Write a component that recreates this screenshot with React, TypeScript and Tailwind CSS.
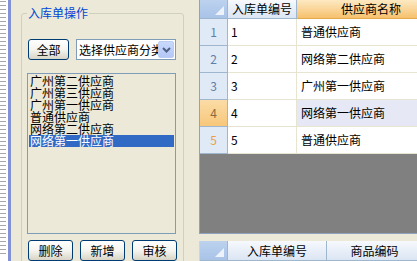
import React from 'react';

const suppliers = ['广州第二供应商', '广州第三供应商', '广州第一供应商', '普通供应商', '网络第二供应商', '网络第一供应商'];

const rows = [
  { no: '1', name: '普通供应商' },
  { no: '2', name: '网络第二供应商' },
  { no: '3', name: '广州第一供应商' },
  { no: '4', name: '网络第一供应商' },
  { no: '5', name: '普通供应商' },
];

function XpButton({ label, className = '' }: { label: string; className?: string }) {
  return (
    <button
      className={`h-[21px] shrink-0 rounded-[3px] border border-[#003c74] bg-linear-to-b from-white via-[#f5f4ef] to-[#d8d4c6] text-[12px] leading-none text-black ${className}`}
    >
      {label}
    </button>
  );
}

function CornerCell() {
  return (
    <div className="relative w-[28px] shrink-0 border-r border-b border-[#9eb6ce] bg-linear-to-b from-[#bcd2ee] to-[#a9c3e8]">
      <svg className="absolute right-[3px] bottom-[3px]" width="9" height="9" viewBox="0 0 9 9">
        <polygon points="9,0 9,9 0,9" fill="#eef3fb" />
      </svg>
    </div>
  );
}

export default function App() {
  const selected = 5;

  return (
    <div className="flex h-[261px] w-[417px] overflow-hidden bg-[#ece9d8] font-['Noto_Sans_CJK_SC','Noto_Sans',sans-serif] text-[12px] text-black">
      {/* tree strip on the far left */}
      <div className="flex w-[8px] shrink-0 flex-col bg-white pt-[1px]">
        {Array.from({ length: 64 }).map((_, i) => (
          <div key={i} className="mb-[3px] h-px w-[6px] bg-[#a8a8a8]" />
        ))}
      </div>
      <div className="w-[3px] shrink-0 bg-[#8392d6]" />

      {/* operations panel */}
      <div className="w-[188px] shrink-0">
        <fieldset className="mt-[6px] ml-[10px] w-[163px] rounded-[3px] border border-[#d0d0bf] pr-[6px] pb-[10px] pl-[5px]">
          <legend className="px-[1px] text-[12px] leading-[14px] text-[#0046d5]">入库单操作</legend>

          <div className="mt-[19px] flex items-center">
            <XpButton label="全部" className="ml-px w-[41px]" />
            <div className="ml-[7px] flex h-[21px] w-[100px] items-center border border-[#7f9db9] bg-white pr-px pl-[2px]">
              <span className="flex-1 overflow-hidden leading-[14px] whitespace-nowrap">选择供应商分类</span>
              <div className="flex h-[17px] w-[16px] shrink-0 items-center justify-center rounded-[2px] border border-[#b9cdf5] bg-linear-to-b from-[#c9d9fd] to-[#b4c8f6]">
                <svg width="9" height="6" viewBox="0 0 9 6">
                  <polyline points="1,1 4.5,4.5 8,1" fill="none" stroke="#4d6185" strokeWidth="2" />
                </svg>
              </div>
            </div>
          </div>

          <div className="mt-[13px] h-[161px] w-[149px] border border-[#7f9db9] bg-[#ece9d8] p-px">
            {suppliers.map((s, i) => (
              <div
                key={s}
                className={`h-[12px] pl-px leading-[12px] whitespace-nowrap ${
                  i === selected ? 'bg-[#316ac5] text-white' : ''
                }`}
              >
                {s}
              </div>
            ))}
          </div>

          <div className="mt-[6px] flex gap-[7px]">
            <XpButton label="删除" className="ml-px w-[45px]" />
            <XpButton label="新增" className="w-[45px]" />
            <XpButton label="审核" className="w-[45px]" />
          </div>
        </fieldset>
      </div>

      {/* grids */}
      <div className="flex w-[218px] shrink-0 flex-col">
        <div className="flex h-[234px] flex-col overflow-hidden border-b border-l border-[#8fa3bf] bg-[#808080]">
          <div className="flex h-[19px] shrink-0">
            <CornerCell />
            <div className="flex w-[69px] shrink-0 items-center justify-center border-r border-b border-[#9eb6ce] bg-linear-to-b from-[#f7f9fd] to-[#dbe5f3] leading-none">
              入库单编号
            </div>
            <div className="flex w-[149px] shrink-0 items-center justify-center border-r border-b border-[#e3a94c] bg-linear-to-b from-[#fde9c2] to-[#f6c16c] leading-none">
              供应商名称
            </div>
          </div>
          {rows.map((r, i) => {
            const current = i === 3;
            return (
              <div key={r.no} className="flex h-[27px] shrink-0">
                <div
                  className={`flex w-[28px] shrink-0 items-center justify-center border-r border-b border-[#9eb6ce] ${
                    current ? 'bg-linear-to-b from-[#fbdca6] to-[#f7c77a] text-[#8a6a3a]' : 'bg-[#e0e9f6]'
                  } ${i === 4 ? 'text-[#e9a23e]' : current ? '' : 'text-[#5f7fa8]'}`}
                >
                  {r.no}
                </div>
                <div className="flex w-[69px] shrink-0 items-center border-r border-b border-[#e8e4d2] bg-white pl-[3px]">
                  {r.no}
                </div>
                <div
                  className={`flex w-[149px] shrink-0 items-center border-r border-b border-[#e8e4d2] pl-[4px] ${
                    current ? 'bg-[#e6e9f5]' : 'bg-white'
                  }`}
                >
                  {r.name}
                </div>
              </div>
            );
          })}
        </div>

        <div className="mt-[7px] flex h-[20px] shrink-0 overflow-hidden border-l border-[#c9d5e6]">
          <CornerCell />
          <div className="flex w-[99px] shrink-0 items-center justify-center border-r border-b border-[#9eb6ce] bg-linear-to-b from-[#f7f9fd] to-[#dbe5f3] leading-none">
            入库单编号
          </div>
          <div className="flex w-[96px] shrink-0 items-center justify-center border-r border-b border-[#9eb6ce] bg-linear-to-b from-[#f7f9fd] to-[#dbe5f3] leading-none">
            商品编码
          </div>
        </div>
      </div>
    </div>
  );
}
